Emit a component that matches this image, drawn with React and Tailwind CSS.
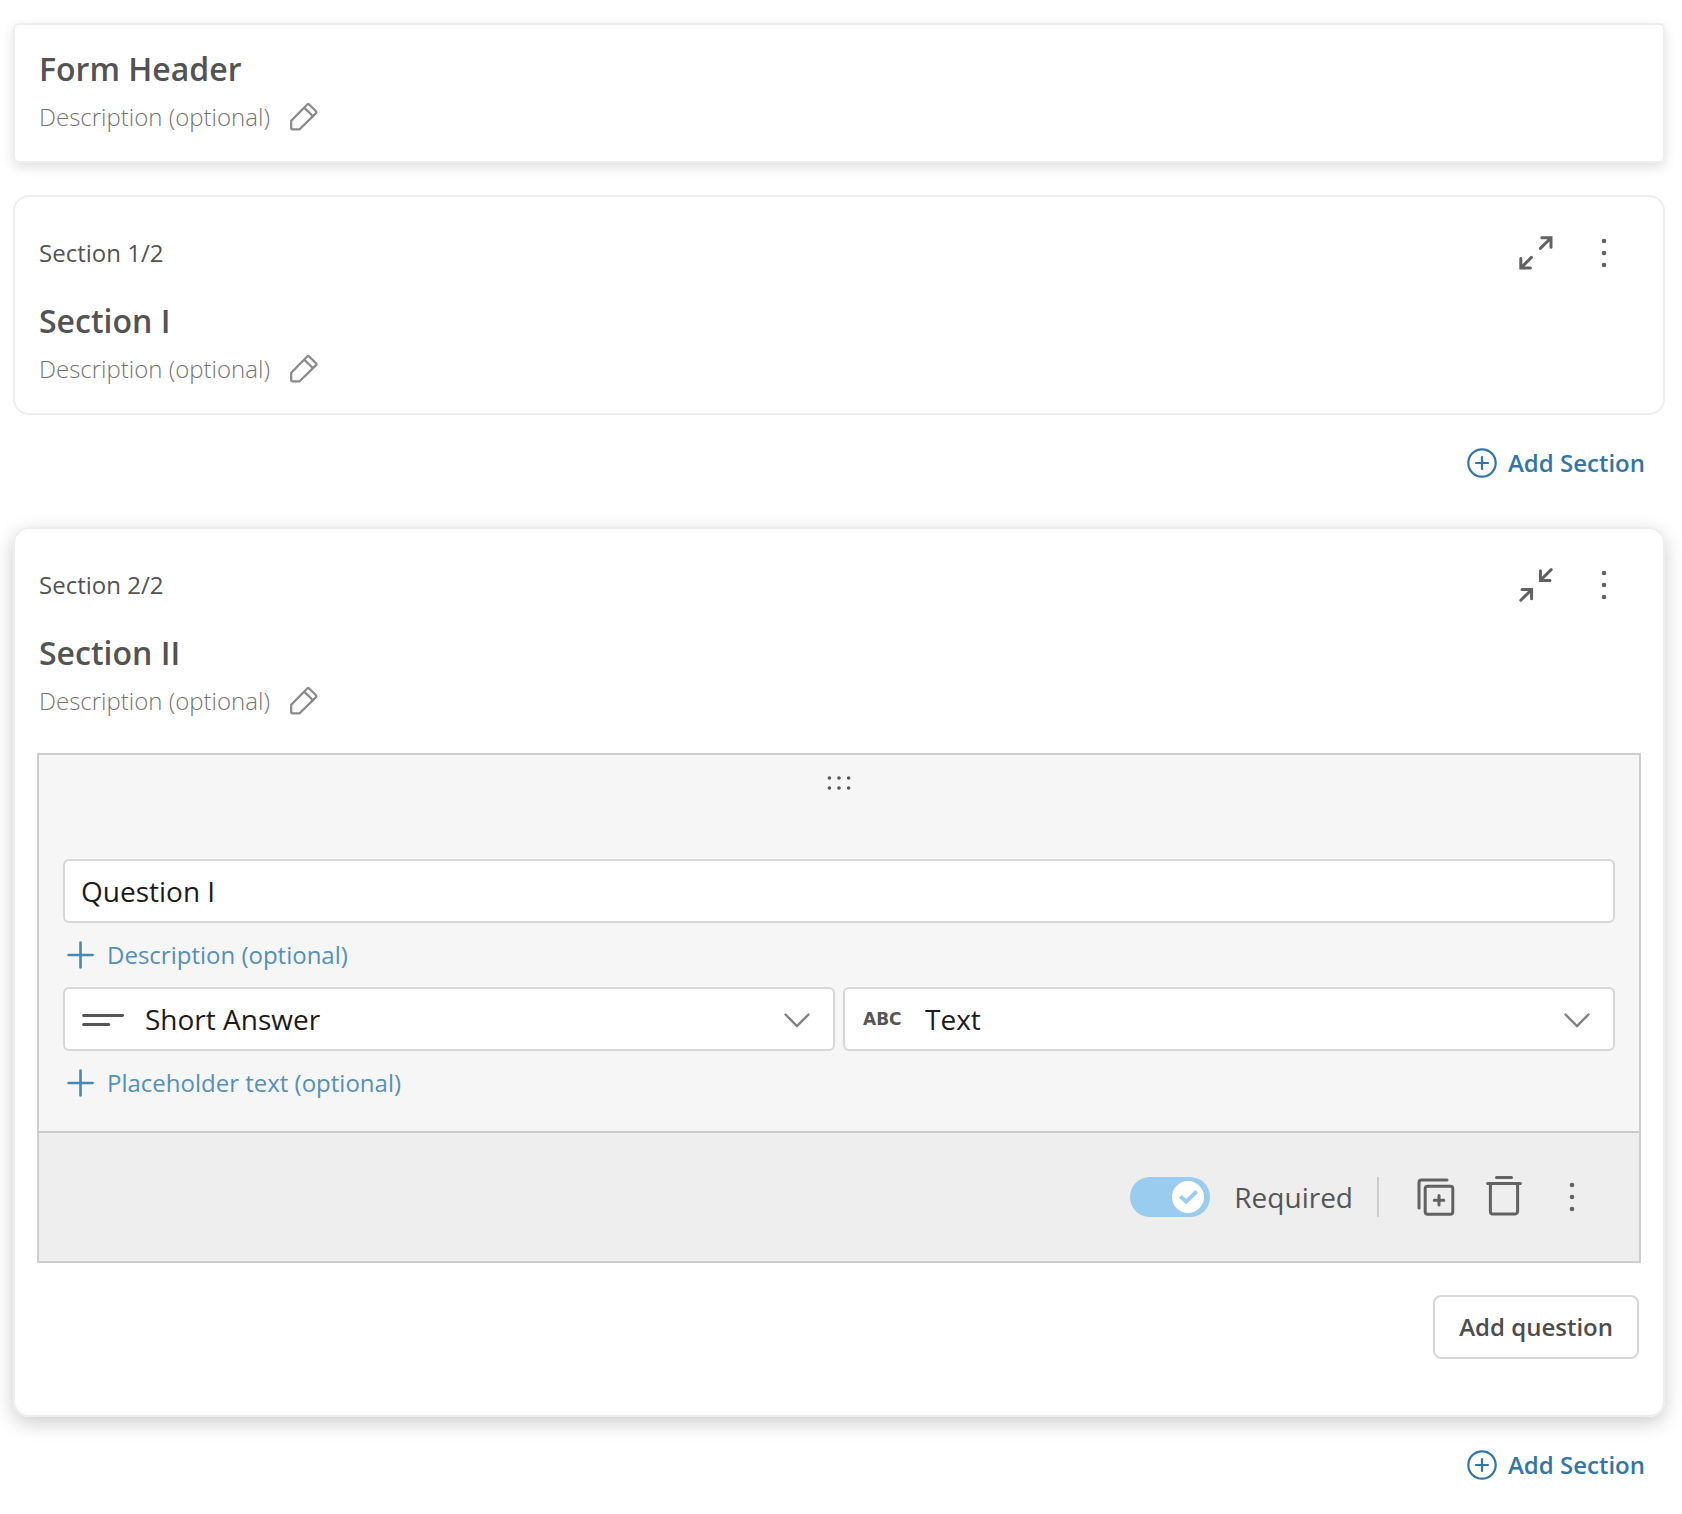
import React, { useState } from 'react';

const PencilIcon = () => (
  <svg width="28" height="28" viewBox="0 0 28 28" fill="none" stroke="currentColor" strokeWidth="2.3" strokeLinejoin="round">
    <path d="M1.2 17.8 17 1.8a1.7 1.7 0 0 1 2.4 0l6.4 6.2a1.7 1.7 0 0 1 0 2.4L9.6 26.3H2.2a1 1 0 0 1-1-1z" />
    <path d="m14.2 4.6 8.8 8.6" />
  </svg>
);

const ExpandIcon = () => (
  <svg width="34" height="34" viewBox="0 0 34 34" fill="none" stroke="currentColor" strokeWidth="3" strokeLinecap="round">
    <path d="M22.8 1.8h9.2v9.4M31.6 2.2 21.4 12.4" />
    <path d="M1.8 22.6V32h9.6M2.2 31.6 12.4 21.4" />
  </svg>
);

const CollapseIcon = () => (
  <svg width="34" height="34" viewBox="0 0 34 34" fill="none" stroke="currentColor" strokeWidth="3" strokeLinecap="round">
    <path d="M21.4 2.8v9.6h9.6M21.8 12 32.2 1.6" />
    <path d="M3 21.6h9.6v9.2M12.2 22 1.8 32.2" />
  </svg>
);

const KebabIcon = () => (
  <svg width="6" height="30" viewBox="0 0 6 30" fill="currentColor">
    <circle cx="3" cy="3" r="2.3" />
    <circle cx="3" cy="15" r="2.3" />
    <circle cx="3" cy="27" r="2.3" />
  </svg>
);

const DragIcon = () => (
  <svg width="24" height="14" viewBox="0 0 24 14" fill="currentColor">
    <circle cx="2.4" cy="2" r="1.8" />
    <circle cx="12" cy="2" r="1.8" />
    <circle cx="21.6" cy="2" r="1.8" />
    <circle cx="2.4" cy="12" r="1.8" />
    <circle cx="12" cy="12" r="1.8" />
    <circle cx="21.6" cy="12" r="1.8" />
  </svg>
);

const PlusCircleIcon = () => (
  <svg width="30" height="30" viewBox="0 0 30 30" fill="none" stroke="currentColor" strokeWidth="2.2" strokeLinecap="round">
    <circle cx="15" cy="15" r="13.7" />
    <path d="M15 9v12M9 15h12" />
  </svg>
);

const PlusIcon = () => (
  <svg width="28" height="28" viewBox="0 0 28 28" fill="none" stroke="#4788b7" strokeWidth="2.6" strokeLinecap="round">
    <path d="M13.5 1.6v24.8M1.6 14h24" />
  </svg>
);

const ShortAnswerIcon = () => (
  <svg width="42" height="16" viewBox="0 0 42 16" fill="none" stroke="currentColor" strokeWidth="3" strokeLinecap="round">
    <path d="M1.6 4.4h39M1.6 13.4h25.2" />
  </svg>
);

const ChevronIcon = () => (
  <svg width="26" height="17" viewBox="0 0 26 17" fill="none" stroke="currentColor" strokeWidth="2.4" strokeLinecap="round">
    <path d="M1.5 3.5 13 15 24.5 3.5" />
  </svg>
);

const DuplicateIcon = () => (
  <svg width="38" height="38" viewBox="0 0 38 38" fill="none" stroke="currentColor" strokeWidth="3" strokeLinecap="round">
    <path d="M2 30V4.5A2.5 2.5 0 0 1 4.5 2H30" />
    <rect x="8.2" y="8.2" width="27.6" height="28" rx="2.4" />
    <path d="M22 17.4v9.6M17.2 22.2h9.6" />
  </svg>
);

const TrashIcon = () => (
  <svg width="36" height="42" viewBox="0 0 36 42" fill="none" stroke="currentColor" strokeWidth="3" strokeLinecap="round">
    <path d="M10.5 1.6h15M1.6 7.6h32.8" />
    <path d="M4.4 8v27.6a2.4 2.4 0 0 0 2.4 2.4h22.4a2.4 2.4 0 0 0 2.4-2.4V8" />
  </svg>
);

const IconButton = ({ label, onClick, children }) => (
  <button type="button" aria-label={label} onClick={onClick} className="size-10 flex items-center justify-center text-[#626262]">
    {children}
  </button>
);

const TitleBlock = ({ title }) => (
  <div className="flex flex-col gap-1.5">
    <h2 className="text-[32px] leading-[48px] font-semibold text-[#535353]">{title}</h2>
    <div className="flex items-center gap-5">
      <p className="text-2xl leading-9 font-light text-[#757575]">Description (optional)</p>
      <button type="button" aria-label={`Edit ${title} description`} className="text-[#8a8a8a]">
        <PencilIcon />
      </button>
    </div>
  </div>
);

const SectionTop = ({ index, total, title, expanded, onToggle }) => (
  <div className="px-6 flex flex-col gap-4">
    <div className="h-14 flex items-center justify-between pr-[15px]">
      <span className="text-2xl leading-9 text-[#535353]">
        Section {index}/{total}
      </span>
      <div className="flex items-center gap-7">
        <IconButton label={expanded ? 'Collapse section' : 'Expand section'} onClick={onToggle}>
          {expanded ? <CollapseIcon /> : <ExpandIcon />}
        </IconButton>
        <IconButton label="Section options">
          <KebabIcon />
        </IconButton>
      </div>
    </div>
    <TitleBlock title={title} />
  </div>
);

const AddSection = () => (
  <div className="flex justify-end pt-[30px] pr-5">
    <button type="button" className="flex items-center gap-[11px] text-2xl leading-9 font-semibold text-[#3276a7]">
      <PlusCircleIcon />
      Add Section
    </button>
  </div>
);

const AddOptional = ({ children }) => (
  <button type="button" className="h-16 pl-1 flex items-center gap-3 text-2xl text-[#5590bb]">
    <PlusIcon />
    {children}
  </button>
);

const IconSelect = ({ label, icon, options }) => (
  <div className="relative flex-1">
    <select
      aria-label={label}
      className="appearance-none w-full h-16 pl-20 pr-16 text-[28px] text-[#1c1c1c] bg-white border-2 border-[#d7d7d7] rounded-md focus:outline-none focus:border-[#4788b7]"
    >
      {options.map((o) => (
        <option key={o}>{o}</option>
      ))}
    </select>
    <span className="absolute inset-y-0 left-[19px] flex items-center text-[#555] pointer-events-none">{icon}</span>
    <span className="absolute inset-y-0 right-[25px] flex items-center text-[#808080] pointer-events-none">
      <ChevronIcon />
    </span>
  </div>
);

const RequiredToggle = () => {
  const [required, setRequired] = useState(true);

  return (
    <label className="flex items-center gap-6 text-[28px] text-[#555] cursor-pointer">
      <span className="relative flex">
        <input
          type="checkbox"
          checked={required}
          onChange={(e) => setRequired(e.target.checked)}
          className="peer appearance-none w-20 h-10 rounded-full bg-[#c4c4c4] checked:bg-[#99ccef]"
        />
        <span className="absolute top-1 left-1 peer-checked:left-[42px] size-8 rounded-full bg-white flex items-center justify-center">
          <svg width="20" height="16" viewBox="0 0 20 16" fill="none" stroke="#99ccef" strokeWidth="4">
            <path d="m2.4 7.4 5.8 5.2L18.8 2.4" />
          </svg>
        </span>
      </span>
      Required
    </label>
  );
};

const QuestionCard = () => {
  const [question, setQuestion] = useState('Question I');

  return (
    <div className="border-2 border-[#cecece] bg-[#f6f6f6]">
      <div className="px-6 pb-4">
        <button type="button" aria-label="Move question" className="w-full h-14 mb-12 flex items-center justify-center text-[#555]">
          <DragIcon />
        </button>
        <input
          type="text"
          aria-label="Question"
          value={question}
          onChange={(e) => setQuestion(e.target.value)}
          className="block w-full h-16 px-4 text-[28px] text-[#1c1c1c] bg-white border-2 border-[#d7d7d7] rounded-md focus:outline-none focus:border-[#4788b7]"
        />
        <AddOptional>Description (optional)</AddOptional>
        <div className="flex gap-2">
          <IconSelect label="Question type" icon={<ShortAnswerIcon />} options={['Short Answer', 'Long Answer']} />
          <IconSelect
            label="Answer format"
            icon={<span className="pt-0.5 pl-px font-['DejaVu_Sans',sans-serif] text-[17px] font-bold">ABC</span>}
            options={['Text', 'Number']}
          />
        </div>
        <AddOptional>Placeholder text (optional)</AddOptional>
      </div>

      <div className="h-[130px] border-t-2 border-[#cbcbcb] bg-[#eee] flex items-center justify-end pr-[47px]">
        <RequiredToggle />
        <div className="w-0.5 h-10 ml-6 mr-[37px] bg-[#cbcbcb]"></div>
        <div className="flex items-center gap-7">
          <IconButton label="Duplicate question">
            <DuplicateIcon />
          </IconButton>
          <IconButton label="Delete question">
            <TrashIcon />
          </IconButton>
          <IconButton label="Question options">
            <KebabIcon />
          </IconButton>
        </div>
      </div>
    </div>
  );
};

const App = () => {
  const [firstOpen, setFirstOpen] = useState(false);
  const [secondOpen, setSecondOpen] = useState(true);

  return (
    <div className="pt-[23px] pl-[13px] pr-[17px] pb-8 bg-white font-['Open_Sans',sans-serif]">
      <header className="px-6 pt-5 pb-[26px] border-2 border-[#eee] rounded-md shadow-[0_4px_12px_rgba(0,0,0,0.13)]">
        <TitleBlock title="Form Header" />
      </header>

      <section className="mt-8 pt-7 pb-[26px] border-2 border-[#eee] rounded-2xl">
        <SectionTop index={1} total={2} title="Section I" expanded={firstOpen} onToggle={() => setFirstOpen(!firstOpen)} />
      </section>
      <AddSection />

      <section className="mt-[46px] pt-7 pb-14 border-2 border-[#eee] rounded-2xl shadow-[0_6px_20px_rgba(0,0,0,0.2)]">
        <SectionTop index={2} total={2} title="Section II" expanded={secondOpen} onToggle={() => setSecondOpen(!secondOpen)} />
        {secondOpen && (
          <div className="mt-[34px] px-[22px]">
            <QuestionCard />
          </div>
        )}
        <div className="mt-8 px-6 flex justify-end">
          <button type="button" className="h-16 px-6 border-2 border-[#d7d7d7] rounded-lg text-2xl font-semibold text-[#4d4d4d]">
            Add question
          </button>
        </div>
      </section>
      <AddSection />
    </div>
  );
};

export default App;
